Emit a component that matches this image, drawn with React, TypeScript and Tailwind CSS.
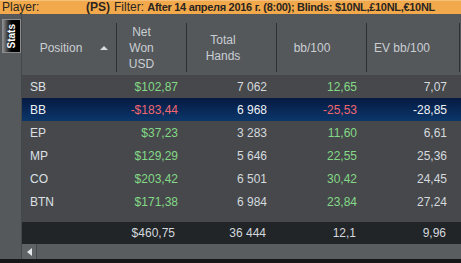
import React from "react";

type Row = {
  pos: string;
  net: string;
  hands: string;
  bb: string;
  ev: string;
  neg?: boolean;
  sel?: boolean;
};

const rows: Row[] = [
  { pos: "SB", net: "$102,87", hands: "7 062", bb: "12,65", ev: "7,07" },
  { pos: "BB", net: "-$183,44", hands: "6 968", bb: "-25,53", ev: "-28,85", neg: true, sel: true },
  { pos: "EP", net: "$37,23", hands: "3 283", bb: "11,60", ev: "6,61" },
  { pos: "MP", net: "$129,29", hands: "5 646", bb: "22,55", ev: "25,36" },
  { pos: "CO", net: "$203,42", hands: "6 501", bb: "30,42", ev: "24,45" },
  { pos: "BTN", net: "$171,38", hands: "6 984", bb: "23,84", ev: "27,24" },
];

const cols = "grid grid-cols-[95px_70px_90px_90px_93px_1fr]";

function Sep() {
  return <div className="w-px h-[49px] bg-[#2d3033] shrink-0" />;
}

export default function App() {
  return (
    <div className="w-[461px] h-[263px] overflow-hidden bg-[#161718] flex flex-col font-['Liberation_Sans',Arial,sans-serif] text-[12px]">
      {/* top filter bar */}
      <div className="h-[14px] shrink-0 bg-[#f2a94b] border-t border-[#f7c07a] text-[#2a2520] leading-[13px] whitespace-nowrap flex overflow-hidden">
        <span className="w-[86px] pl-[2px] shrink-0">Player:</span>
        <span className="w-[28px] font-bold shrink-0">(PS)</span>
        <span className="shrink-0">Filter:&nbsp;</span>
        <span className="font-bold text-[11px] tracking-[-0.3px] shrink-0">
          After 14 апреля 2016 г. (8:00); Blinds: $10NL,£10NL,€10NL
        </span>
      </div>

      <div className="flex h-[245px] shrink-0">
        {/* left strip with Stats tab */}
        <div className="w-[22px] shrink-0 bg-[#56595c] border-r border-[#45484b] pt-[5px] pl-[2px]">
          <div className="w-[19px] h-[34px] border border-[#8a8d90] bg-linear-to-r from-[#8c8c8c] via-[#050505] to-[#000000] flex items-center justify-center">
            <span className="[writing-mode:vertical-rl] rotate-180 text-white font-bold text-[10px] leading-[10px]">
              Stats
            </span>
          </div>
        </div>

        {/* table */}
        <div className="flex-1 flex flex-col overflow-hidden">
          {/* header */}
          <div className={`${cols} h-[61px] shrink-0 bg-[#55585b] pt-[6px] text-[#c9ced3] leading-[16px]`}>
            <div className="flex items-center">
              <div className="w-[78px] text-center shrink-0">Position</div>
              <div className="w-[8px] h-[4px] shrink-0 flex justify-center">
                <svg width="8" height="4" viewBox="0 0 8 4">
                  <polygon points="0,4 4,0 8,4" fill="#d9dde1" />
                </svg>
              </div>
              <div className="flex-1" />
              <Sep />
            </div>
            <div className="flex items-center">
              <div className="flex-1 text-center pr-[20px]">
                Net
                <br />
                Won
                <br />
                USD
              </div>
              <Sep />
            </div>
            <div className="flex items-center">
              <div className="flex-1 text-center pr-[17px]">
                Total
                <br />
                Hands
              </div>
              <Sep />
            </div>
            <div className="flex items-center">
              <div className="flex-1 text-center pr-[19px]">bb/100</div>
              <Sep />
            </div>
            <div className="flex items-center">
              <div className="flex-1 text-center pr-[22px]">EV bb/100</div>
              <Sep />
            </div>
            <div />
          </div>

          {/* rows */}
          <div className="flex flex-col bg-[#46484b] shrink-0">
            {rows.map((r) => {
              const posC = r.sel ? "text-[#eef1f4]" : "text-[#dde1e6]";
              const numC = r.sel ? "text-[#eef1f4]" : "text-[#d5dade]";
              const valC = r.neg ? "text-[#f0676f]" : "text-[#85d887]";
              return (
                <div
                  key={r.pos}
                  className={`${cols} h-[23px] items-center whitespace-nowrap ${
                    r.sel ? "bg-linear-to-b from-[#061a42] to-[#0b376b]" : ""
                  }`}
                >
                  <div className={`pl-[8px] ${posC}`}>{r.pos}</div>
                  <div className={`text-right pr-[9px] ${valC}`}>{r.net}</div>
                  <div className={`text-right pr-[10px] ${numC}`}>{r.hands}</div>
                  <div className={`text-right pr-[10px] ${valC}`}>{r.bb}</div>
                  <div className={`text-right pr-[13px] ${numC}`}>{r.ev}</div>
                  <div />
                </div>
              );
            })}
          </div>
          <div className="h-[9px] shrink-0 bg-[#46484b]" />

          {/* totals */}
          <div className={`${cols} h-[22px] shrink-0 bg-[#222528] items-center text-[#d3d8dd] whitespace-nowrap`}>
            <div />
            <div className="text-right pr-[12px]">$460,75</div>
            <div className="text-right pr-[11px]">36 444</div>
            <div className="text-right pr-[11px]">12,1</div>
            <div className="text-right pr-[14px]">9,96</div>
            <div />
          </div>

          {/* horizontal scrollbar */}
          <div className="h-[15px] shrink-0 flex bg-[#5a5d60]">
            <div className="w-[15px] h-full bg-[#606366] border-r border-[#46494c] flex items-center justify-center">
              <svg width="5" height="8" viewBox="0 0 5 8">
                <polygon points="5,0 0,4 5,8" fill="#e6e8ea" />
              </svg>
            </div>
            <div className="flex-1" />
          </div>
        </div>
      </div>

      <div className="flex-1 bg-[#161718]" />
    </div>
  );
}
